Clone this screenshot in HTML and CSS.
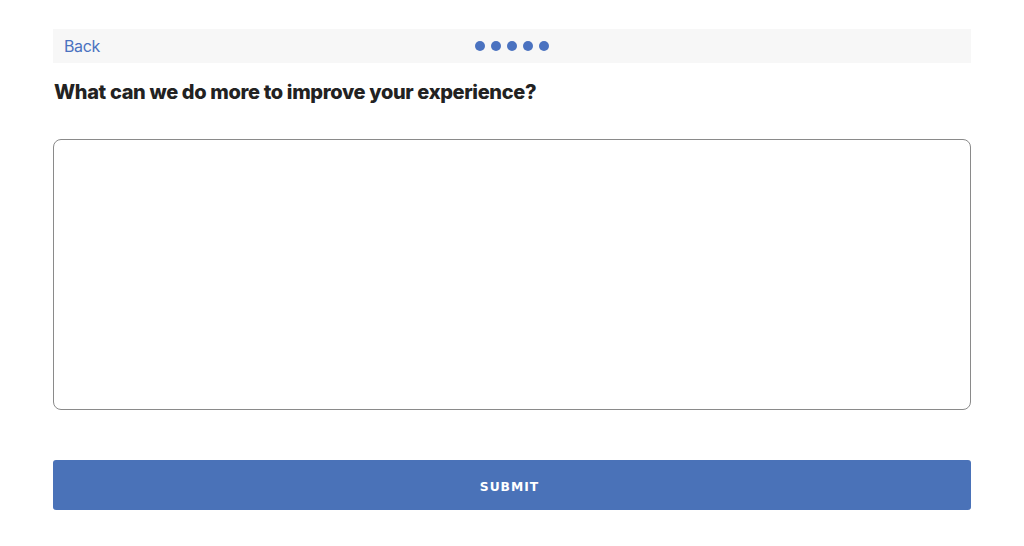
FILE: index.html
```html
<!DOCTYPE html>
<html>
<head>
<meta charset="utf-8">
<link rel="stylesheet" href="styles.css">
</head>
<body>
<div class="wrap">
  <div class="topbar">
    <a class="back" href="#">Back</a>
    <div class="dots"><span></span><span></span><span></span><span></span><span></span></div>
  </div>
  <h1 class="question">What can we do more to improve your experience?</h1>
  <textarea class="answer"></textarea>
  <button class="submit">SUBMIT</button>
</div>
</body>
</html>
```
FILE: styles.css
```css
html, body { margin: 0; padding: 0; background: #fff; }
body { font-family: Inter, "Liberation Sans", sans-serif; }
.wrap { width: 918px; margin: 0 auto; padding-top: 29px; display: flex; flex-direction: column; }
.topbar { position: relative; height: 34px; background: #f7f7f7; display: flex; align-items: center; padding-left: 11px; }
.back { color: #4a72c0; text-decoration: none; font-size: 16px; letter-spacing: -0.4px; }
.dots { position: absolute; left: 0; right: 0; top: 0; bottom: 0; display: flex; justify-content: center; align-items: center; gap: 6px; pointer-events: none; }
.dots span { width: 10px; height: 10px; border-radius: 50%; background: #4a72c0; }
.question { margin: 16px 0 0 1px; font-size: 20px; font-weight: 800; color: #222; letter-spacing: -0.35px; line-height: 26px; }
.answer { margin-top: 34px; height: 271px; box-sizing: border-box; border: 1px solid #8a8a8a; border-radius: 8px; resize: none; width: 100%; }
.submit { margin-top: 50px; height: 50px; padding: 3px 5px 0 0; border: none; border-radius: 3px; background: #4a72b8; color: #fff; font-family: "DejaVu Sans", Verdana, sans-serif; font-weight: 700; font-size: 12.3px; letter-spacing: 1px; }
```
